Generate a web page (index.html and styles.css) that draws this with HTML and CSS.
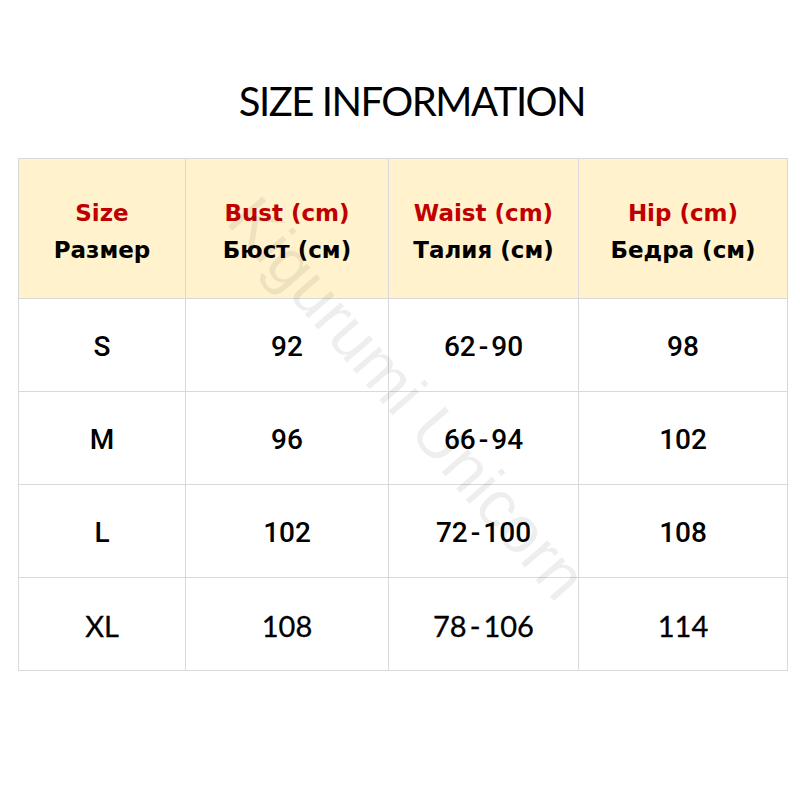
FILE: index.html
```html
<!DOCTYPE html>
<html>
<head>
<meta charset="utf-8">
<link rel="stylesheet" href="styles.css">
</head>
<body>
<div class="page">
  <h1 class="title">SIZE INFORMATION</h1>
  <table class="sizes">
    <colgroup>
      <col class="c1"><col class="c2"><col class="c3"><col class="c4">
    </colgroup>
    <thead>
      <tr>
        <th><span class="en">Size</span><span class="ru">Размер</span></th>
        <th><span class="en">Bust (cm)</span><span class="ru">Бюст (см)</span></th>
        <th><span class="en">Waist (cm)</span><span class="ru">Талия (см)</span></th>
        <th><span class="en">Hip (cm)</span><span class="ru">Бедра (см)</span></th>
      </tr>
    </thead>
    <tbody>
      <tr><td>S</td><td>92</td><td>62<span class="dash">-</span>90</td><td>98</td></tr>
      <tr><td>M</td><td>96</td><td>66<span class="dash">-</span>94</td><td>102</td></tr>
      <tr><td>L</td><td>102</td><td>72<span class="dash">-</span>100</td><td>108</td></tr>
      <tr class="last"><td>XL</td><td>108</td><td>78<span class="dash">-</span>106</td><td>114</td></tr>
    </tbody>
  </table>
  <div class="watermark">Kigurumi Unicorn</div>
</div>
</body>
</html>
```

FILE: styles.css
```css
html, body {
  margin: 0;
  padding: 0;
  background: #ffffff;
}

.page {
  position: relative;
  width: 800px;
  height: 800px;
  overflow: hidden;
  display: flex;
  flex-direction: column;
  align-items: flex-start;
}

.title {
  margin: 0;
  padding: 81px 0 0 24px;
  align-self: center;
  font-family: "Lato", "Open Sans", sans-serif;
  font-weight: 400;
  font-size: 40px;
  line-height: 40px;
  height: 40px;
  color: #000;
  letter-spacing: -1.5px;
}

.sizes {
  margin: 37px 0 0 18px;
  width: 769px;
  border-collapse: collapse;
  table-layout: fixed;
}

.c1 { width: 167px; }
.c2 { width: 203px; }
.c3 { width: 190px; }
.c4 { width: 209px; }

.sizes th,
.sizes td {
  border: 1px solid #d9d9d9;
  text-align: center;
  vertical-align: middle;
  padding: 0;
}

.sizes th {
  background: #fff2cc;
  height: 133px;
  padding-top: 6px;
  font-family: "DejaVu Sans", "Open Sans", sans-serif;
  font-weight: 700;
  font-size: 23px;
  line-height: 37px;
}

.sizes th span {
  display: block;
}

.en { color: #c00000; }
.ru { color: #000000; }

.sizes td {
  height: 90px;
  font-family: "Roboto", "Liberation Sans", sans-serif;
  font-weight: 500;
  font-size: 28px;
  color: #000;
  padding-top: 2px;
}

.dash {
  margin: 0 3px;
}

.sizes tr.last td {
  font-family: "Lato", "Open Sans", sans-serif;
  font-weight: 400;
  font-size: 29px;
  -webkit-text-stroke: 0.3px #000;
}

.watermark {
  position: absolute;
  left: 408px;
  top: 398px;
  transform: translate(-50%, -50%) rotate(49deg);
  font-family: "Liberation Sans", sans-serif;
  font-size: 66px;
  color: rgba(0, 0, 0, 0.065);
  white-space: nowrap;
  pointer-events: none;
}
```
